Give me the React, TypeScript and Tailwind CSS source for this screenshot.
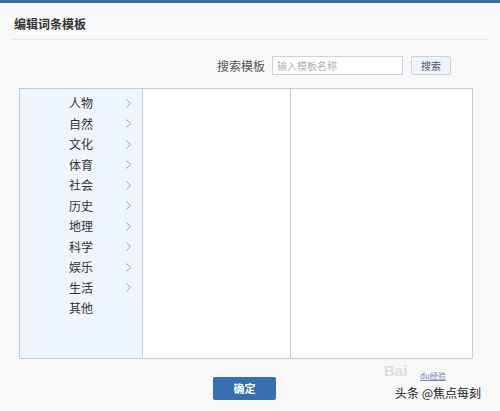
import { ChevronRight } from 'lucide-react'

const categories = ['人物', '自然', '文化', '体育', '社会', '历史', '地理', '科学', '娱乐', '生活', '其他']

export default function App() {
  return (
    <div
      className="relative w-[500px] h-[411px] overflow-hidden bg-[#f8f8f8] text-[#333]"
      style={{ fontFamily: '"Noto Sans CJK SC", "Noto Sans", sans-serif' }}
    >
      {/* top bar */}
      <div className="h-[3px] bg-[#3b6ea8]" />

      {/* title */}
      <div className="mx-[12px] pt-[12px] pb-[6px] px-[2px] border-b border-[#e6e6e6]">
        <h1 className="text-[12px] leading-[18px] font-semibold text-[#333]">编辑词条模板</h1>
      </div>

      {/* search */}
      <div className="flex items-center justify-end pr-[49px] mt-[16px]">
        <span className="text-[12px] text-[#555] mr-[7px]">搜索模板</span>
        <input
          className="w-[131px] h-[19px] border border-[#c9d3de] bg-white px-[4px] text-[10px] outline-none placeholder:text-[#b0b0b0]"
          placeholder="输入模板名称"
        />
        <button
          type="button"
          className="ml-[8px] w-[40px] h-[19px] border border-[#c9d3de] bg-[#edf3fa] text-[10px] text-[#555] rounded-[2px]"
        >
          搜索
        </button>
      </div>

      {/* panels */}
      <div className="ml-[19px] mt-[13px] w-[454px] h-[271px] flex border border-[#c3ccda] bg-white">
        <div className="w-[123px] h-full bg-[#eff5fc] border-r border-[#c3ccda] pt-[4px]">
          {categories.map((c, i) => (
            <div key={c} className="h-[20.5px] flex items-center pl-[49px] pr-[6px]">
              <span className="text-[12px] leading-none text-[#333] flex-1">{c}</span>
              {i < categories.length - 1 && (
                <ChevronRight className="w-[15px] h-[15px] text-[#9ba1a9]" strokeWidth={1.6} />
              )}
            </div>
          ))}
        </div>
        <div className="w-[148px] h-full border-r border-[#c3ccda]" />
        <div className="flex-1 h-full" />
      </div>

      {/* confirm */}
      <div className="flex mt-[18px] pl-[213px]">
        <button
          type="button"
          className="w-[63px] h-[23px] rounded-[2px] bg-[#3670b0] text-white text-[11px] font-bold"
        >
          确定
        </button>
      </div>

      {/* watermark */}
      <div
        className="absolute left-[384px] top-[363px] text-[15px] leading-none text-[#dcdcdc] font-bold"
        style={{ fontFamily: '"Liberation Sans", sans-serif' }}
      >
        Bai
      </div>
      <div className="absolute left-[420px] top-[372px] text-[8px] leading-none text-[#6f7fb8] underline">du经验</div>
      <div className="absolute left-[395px] top-[387px] text-[12px] leading-none text-[#222]">头条 @焦点每刻</div>
    </div>
  )
}
